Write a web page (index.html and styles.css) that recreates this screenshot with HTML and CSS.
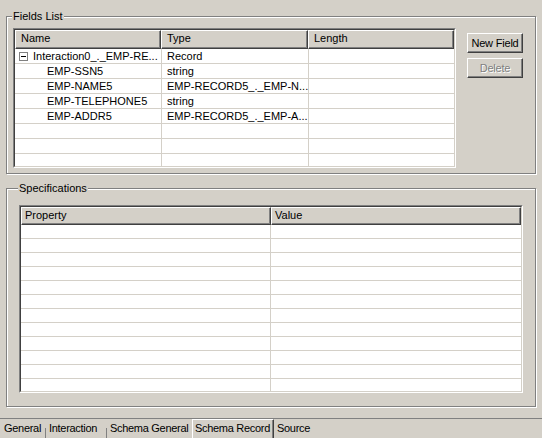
FILE: index.html
```html
<!DOCTYPE html>
<html>
<head>
<meta charset="utf-8">
<link rel="stylesheet" href="styles.css">
</head>
<body>
<div class="window">
  <fieldset class="group group-fields">
    <legend>Fields List</legend>
    <div class="fields-body">
      <div class="grid grid-fields">
        <div class="grid-inner">
          <div class="grid-head">
            <div class="hcell f1">Name</div>
            <div class="hcell f2">Type</div>
            <div class="hcell f3">Length</div>
          </div>
          <div class="grid-body body-fields">
            <div class="row">
              <div class="cell f1 tree-root"><svg class="expander" width="9" height="9" viewBox="0 0 9 9"><rect x="0.5" y="0.5" width="8" height="8" fill="#fff" stroke="#808080"/><line x1="2" y1="4.5" x2="7" y2="4.5" stroke="#000"/></svg>Interaction0_._EMP-RE...</div>
              <div class="cell f2">Record</div>
              <div class="cell f3"></div>
            </div>
            <div class="row">
              <div class="cell f1 tree-child">EMP-SSN5</div>
              <div class="cell f2">string</div>
              <div class="cell f3"></div>
            </div>
            <div class="row">
              <div class="cell f1 tree-child">EMP-NAME5</div>
              <div class="cell f2">EMP-RECORD5_._EMP-N...</div>
              <div class="cell f3"></div>
            </div>
            <div class="row">
              <div class="cell f1 tree-child">EMP-TELEPHONE5</div>
              <div class="cell f2">string</div>
              <div class="cell f3"></div>
            </div>
            <div class="row">
              <div class="cell f1 tree-child">EMP-ADDR5</div>
              <div class="cell f2">EMP-RECORD5_._EMP-A...</div>
              <div class="cell f3"></div>
            </div>
            <div class="row"><div class="cell f1"></div><div class="cell f2"></div><div class="cell f3"></div></div>
            <div class="row"><div class="cell f1"></div><div class="cell f2"></div><div class="cell f3"></div></div>
            <div class="row"><div class="cell f1"></div><div class="cell f2"></div><div class="cell f3"></div></div>
          </div>
        </div>
      </div>
      <div class="buttons">
        <button class="btn">New Field</button>
        <button class="btn" disabled>Delete</button>
      </div>
    </div>
  </fieldset>

  <fieldset class="group group-specs">
    <legend>Specifications</legend>
    <div class="grid grid-specs">
      <div class="grid-inner">
        <div class="grid-head head-specs">
          <div class="hcell s1">Property</div>
          <div class="hcell s2">Value</div>
        </div>
        <div class="grid-body body-specs">
          <div class="row srow"><div class="cell s1"></div><div class="cell s2"></div></div>
          <div class="row srow"><div class="cell s1"></div><div class="cell s2"></div></div>
          <div class="row srow"><div class="cell s1"></div><div class="cell s2"></div></div>
          <div class="row srow"><div class="cell s1"></div><div class="cell s2"></div></div>
          <div class="row srow"><div class="cell s1"></div><div class="cell s2"></div></div>
          <div class="row srow"><div class="cell s1"></div><div class="cell s2"></div></div>
          <div class="row srow"><div class="cell s1"></div><div class="cell s2"></div></div>
          <div class="row srow"><div class="cell s1"></div><div class="cell s2"></div></div>
          <div class="row srow"><div class="cell s1"></div><div class="cell s2"></div></div>
          <div class="row srow"><div class="cell s1"></div><div class="cell s2"></div></div>
          <div class="row srow"><div class="cell s1"></div><div class="cell s2"></div></div>
          <div class="row srow"><div class="cell s1"></div><div class="cell s2"></div></div>
        </div>
      </div>
    </div>
  </fieldset>

  <div class="tabs">
    <div class="tab t-general">General</div>
    <span class="tab-sep"></span>
    <div class="tab t-interaction">Interaction</div>
    <span class="tab-sep"></span>
    <div class="tab t-schema-general">Schema General</div>
    <div class="tab t-schema-record selected">Schema Record</div>
    <div class="tab t-source">Source</div>
  </div>
</div>
</body>
</html>
```

FILE: styles.css
```css
html, body {
  margin: 0;
  padding: 0;
  background: #d4d0c8;
}

body {
  width: 542px;
  height: 438px;
  overflow: hidden;
  font-family: "Liberation Sans", Arial, sans-serif;
  font-size: 11px;
  color: #000;
}

.window {
  display: flow-root;
  padding-top: 10px;
}

.group {
  box-sizing: border-box;
  width: 530px;
  min-width: 0;
  margin: 0 0 0 6px;
  border: 1px solid #808080;
  box-shadow: inset 1px 1px #fff, 1px 1px #fff;
  padding: 5px 12px 5px 6px;
}

.group legend {
  padding: 0 1px;
  margin-left: -1px;
  line-height: 13px;
  height: 13px;
  background: #d4d0c8;
}

.group-specs {
  margin-top: 8px;
  padding: 10px 12px 13px 12px;
}

.fields-body {
  display: flex;
  align-items: flex-start;
  gap: 11px;
}

/* sunken list/table */
.grid {
  box-sizing: border-box;
  border: 1px solid;
  border-color: #808080 #fff #fff #808080;
  background: #fff;
}

.grid-inner {
  border: 1px solid;
  border-color: #404040 #d4d0c8 #d4d0c8 #404040;
  overflow: hidden;
}

.grid-fields {
  width: 444px;
  height: 140px;
}

.grid-specs {
  width: 504px;
  height: 188px;
}

.grid-head {
  display: flex;
  height: 19px;
  background: #d4d0c8;
}

.head-specs {
  height: 18px;
}

.hcell {
  box-sizing: border-box;
  height: 100%;
  border-top: 1px solid #fff;
  border-left: 1px solid #fff;
  border-right: 1px solid #404040;
  border-bottom: 1px solid #404040;
  box-shadow: inset -1px -1px #808080;
  padding-left: 5px;
  line-height: 15px;
  white-space: nowrap;
  overflow: hidden;
}

.head-specs .hcell {
  padding-left: 3px;
  line-height: 14px;
}

.f1 { width: 146px; flex: none; }
.f2 { width: 147px; flex: none; }
.f3 { flex: 1; }

.s1 { width: 250px; flex: none; }
.s2 { flex: 1; }

.grid-body {
  overflow: hidden;
  background: #fff;
}

.body-fields { height: 117px; }
.body-specs { height: 166px; }

.row {
  display: flex;
  box-sizing: border-box;
  height: 15px;
  border-bottom: 1px solid #d4d0c8;
}

.srow {
  height: 14px;
}

.cell {
  box-sizing: border-box;
  border-right: 1px solid #d4d0c8;
  padding-left: 5px;
  line-height: 14px;
  white-space: nowrap;
  overflow: hidden;
}

.row .f1 { width: 147px; }
.row .f3 { border-right: none; }
.row .s2 { border-right: none; }

.tree-root {
  display: flex;
  align-items: center;
  padding-left: 4px;
}

.expander {
  flex: none;
  margin-right: 5px;
}

.tree-child {
  padding-left: 32px;
}

/* buttons */
.buttons {
  display: flex;
  flex-direction: column;
  gap: 5px;
  margin-top: 5px;
}

.btn {
  box-sizing: border-box;
  width: 56px;
  height: 20px;
  padding: 0;
  margin: 0;
  font: inherit;
  letter-spacing: -0.2px;
  color: #000;
  background: #d4d0c8;
  border: 1px solid;
  border-color: #fff #404040 #404040 #fff;
  box-shadow: inset -1px -1px #808080;
  border-radius: 0;
}

.btn:disabled {
  color: #808080;
  text-shadow: 1px 1px 0 #fff;
}

/* bottom tabs */
.tabs {
  display: flex;
  margin-top: 11px;
  border-top: 1px solid #808080;
  height: 19px;
}

.tab {
  box-sizing: border-box;
  height: 19px;
  line-height: 18px;
  padding-left: 3px;
  white-space: nowrap;
  letter-spacing: -0.3px;
  flex: none;
}

.t-general { width: 45px; padding-left: 4px; }
.t-interaction { width: 60px; }
.t-schema-general { width: 85px; }
.t-schema-record { width: 82px; }
.t-source { width: 50px; }

.tab.selected {
  border-left: 1px solid #fff;
  border-top: 1px solid #fff;
  border-right: 1px solid #404040;
  box-shadow: inset -1px 0 #808080;
  padding-left: 2px;
  line-height: 17px;
}

.tab-sep {
  flex: none;
  align-self: flex-end;
  width: 1px;
  height: 10px;
  background: #808080;
}
```
